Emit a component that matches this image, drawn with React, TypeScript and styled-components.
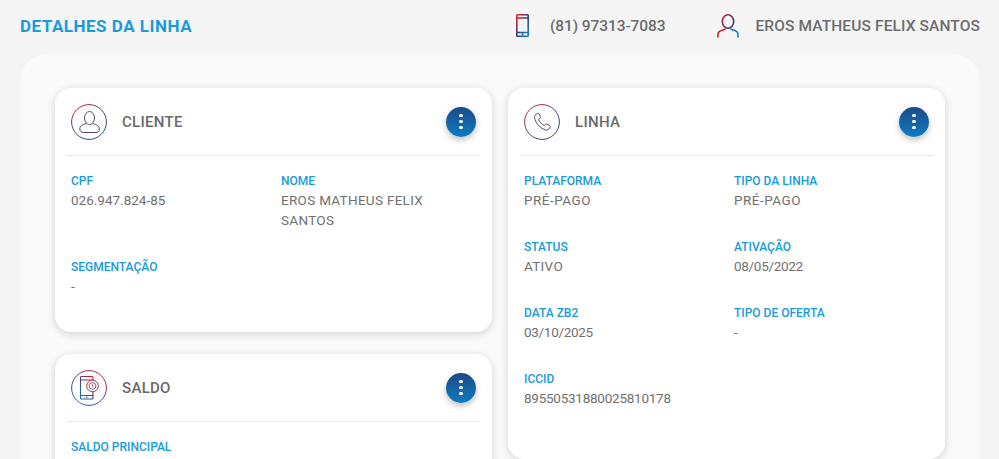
import styled, { createGlobalStyle } from "styled-components";
import type { ReactNode } from "react";

const GlobalStyle = createGlobalStyle`
  html, body {
    margin: 0;
    height: 459px;
    overflow: hidden;
    background: #f5f5f5;
    font-family: "Roboto", "Liberation Sans", sans-serif;
  }
`;

const Page = styled.div`
  width: 999px;
  height: 459px;
  overflow: hidden;
  box-sizing: border-box;
  padding: 0 20px 0 21px;
`;

const TopBar = styled.header`
  height: 55px;
  display: flex;
  align-items: center;
  justify-content: space-between;
  margin: 0 -1px;
  padding-bottom: 4px;
  box-sizing: border-box;
`;

const PageTitle = styled.h1`
  margin: 0;
  font-size: 17px;
  font-weight: 700;
  letter-spacing: 0.5px;
  color: #1a9ad9;
`;

const TopInfo = styled.div`
  display: flex;
  align-items: center;
`;

const InfoItem = styled.div<{ $gap: number; $left?: number; $spacing: number }>`
  display: flex;
  align-items: center;
  gap: ${(p) => p.$gap}px;
  margin-left: ${(p) => p.$left ?? 0}px;
  font-size: 15.5px;
  font-weight: 500;
  letter-spacing: ${(p) => p.$spacing}px;
  color: #6c6c6c;
`;

const Panel = styled.main`
  background: #fafafa;
  border-radius: 24px 24px 0 0;
  padding: 33px 34px 0;
  display: grid;
  grid-template-columns: 437px 437px;
  column-gap: 16px;
  align-items: start;
  height: 404px;
  box-sizing: border-box;
`;

const Column = styled.div`
  display: flex;
  flex-direction: column;
  gap: 22px;
`;

const Card = styled.section<{ $height: number }>`
  background: #fff;
  border-radius: 16px;
  height: ${(p) => p.$height}px;
  box-sizing: border-box;
  padding: 0 12px;
  box-shadow: 0 2px 8px rgba(0, 0, 0, 0.16);
`;

const CardHeader = styled.div`
  height: 67px;
  display: flex;
  align-items: center;
  border-bottom: 1px solid #e9e9e9;
  padding: 0 4px;
`;

const CardTitle = styled.h2`
  margin: 0 0 0 15px;
  flex: 1;
  font-size: 15px;
  font-weight: 500;
  letter-spacing: 0.3px;
  color: #6a6a6a;
`;

const MenuButton = styled.button`
  width: 30px;
  height: 30px;
  padding: 0;
  border: none;
  border-radius: 50%;
  display: flex;
  flex-direction: column;
  align-items: center;
  justify-content: center;
  gap: 2.5px;
  background: linear-gradient(180deg, #1d4a86 0%, #0c7cc2 100%);
  box-shadow: 0 3px 6px rgba(0, 0, 0, 0.25);
`;

const Dot = styled.span`
  width: 3.5px;
  height: 3.5px;
  border-radius: 50%;
  background: #fff;
`;

const Fields = styled.div`
  display: grid;
  grid-template-columns: 210px 1fr;
  padding: 16px 4px 0;
`;

const Field = styled.div`
  padding-bottom: 28px;
  max-width: 170px;
`;

const Label = styled.div`
  font-size: 12px;
  line-height: 18px;
  font-weight: 500;
  color: #1a9ad9;
`;

const Value = styled.div<{ $spacing: number }>`
  font-size: 13.5px;
  line-height: 20px;
  font-weight: 400;
  letter-spacing: ${(p) => p.$spacing}px;
  color: #707070;
`;

const PhoneIcon = () => (
  <svg width="13" height="23" viewBox="0 0 13 23" fill="none">
    <defs>
      <linearGradient id="topPhone" x1="0" y1="0" x2="1" y2="1">
        <stop offset="0.1" stopColor="#d3202f" />
        <stop offset="0.5" stopColor="#2b3f80" />
        <stop offset="1" stopColor="#1680c4" />
      </linearGradient>
    </defs>
    <rect x="0.8" y="0.8" width="11.4" height="21.4" rx="0.8" stroke="url(#topPhone)" strokeWidth="1.6" />
    <path d="M1 4h11M1 18.500h11" stroke="url(#topPhone)" strokeWidth="1.4" />
    <circle cx="6.500" cy="20.300" r="1" fill="#2b3f80" />
  </svg>
);

const UserIcon = () => (
  <svg width="22" height="24" viewBox="0 0 22 24" fill="none" strokeWidth="1.6" strokeLinecap="round">
    <defs>
      <linearGradient id="topHead" x1="0" y1="0" x2="1" y2="1">
        <stop offset="0" stopColor="#c8202f" />
        <stop offset="1" stopColor="#24407f" />
      </linearGradient>
    </defs>
    <ellipse cx="11" cy="7.500" rx="5.700" ry="6.700" stroke="url(#topHead)" />
    <path d="M1 23v-2.500c0-2.500 1.500-3.500 3.500-4l3.500-1.200" stroke="#c8202f" />
    <path d="M21 23v-2.500c0-2.500-1.500-3.500-3.500-4L14 15.300" stroke="#1680c4" />
  </svg>
);

const Ring = ({ id, flip, children }: { id: string; flip?: boolean; children: ReactNode }) => (
  <svg width="36" height="36" viewBox="0 0 36 36" fill="none" style={{ flexShrink: 0 }}>
    <defs>
      <linearGradient id={id} x1={flip ? "0.85" : "0.15"} y1="0.1" x2={flip ? "0.15" : "0.85"} y2="0.9">
        <stop offset="0" stopColor="#c8202f" />
        <stop offset="0.5" stopColor="#4a3a7c" />
        <stop offset="1" stopColor={flip ? "#1f6cb0" : "#1f4e8c"} />
      </linearGradient>
    </defs>
    <circle cx="18" cy="18" r="17.400" stroke={`url(#${id})`} strokeWidth="1" />
    {children}
  </svg>
);

const ClientIcon = () => (
  <Ring id="ringClient">
    <ellipse cx="18.500" cy="14" rx="5" ry="6.500" stroke="#5a4a6e" strokeWidth="1" />
    <path
      d="M15 19.500c-3 1.200-6.200 2-6.200 5.300 0 2.500 1.500 3.700 3.500 3.700h12.500c2 0 3.500-1.200 3.500-3.700 0-3.300-3.200-4.100-6.200-5.300"
      stroke="#4a3f6e"
      strokeWidth="1"
    />
  </Ring>
);

const PhoneCallIcon = () => (
  <Ring id="ringPhone">
    <path
      transform="translate(0 1)"
      d="M11.500 9.500l2.200-1.200c.6-.2 1 0 1.300.5l1.400 3c.2.500.1.900-.3 1.200l-1.500 1.200c.8 2.500 3 5 5.600 6.300l1.500-1.300c.4-.3.800-.4 1.300-.1l2.800 1.700c.5.300.6.800.3 1.300l-1.500 2.100c-.8 1-2 1.200-3.300.7-6-2.300-9.800-7-10.800-12.300-.1-1.200.1-2 1-2.600z"
      stroke="#5a4a6e"
      strokeWidth="1"
    />
  </Ring>
);

const BalanceIcon = () => (
  <Ring id="ringBalance" flip>
    <rect x="9.500" y="6.500" width="12.500" height="22.500" rx="1" stroke="url(#ringBalance)" strokeWidth="1.100" />
    <path d="M9.500 10h12.500M9.500 25.500h12.500" stroke="url(#ringBalance)" strokeWidth="1" />
    <circle cx="21.500" cy="16" r="5.800" fill="#fff" stroke="#b03048" strokeWidth="1" />
    <circle cx="21.500" cy="16" r="3.400" stroke="#4a3f6e" strokeWidth="0.800" />
    <path d="M21.500 14.300v2.200M21.500 17.300v.5" stroke="#c8202f" strokeWidth="0.900" />
    <circle cx="15.700" cy="27.300" r="0.800" fill="#2b5f9c" />
  </Ring>
);

const Menu = () => (
  <MenuButton aria-label="Opções">
    <Dot />
    <Dot />
    <Dot />
  </MenuButton>
);

const Info = ({ label, spacing = 0.3, children }: { label: string; spacing?: number; children?: ReactNode }) => (
  <Field>
    <Label>{label}</Label>
    {children && <Value $spacing={spacing}>{children}</Value>}
  </Field>
);

const App = () => {
  return (
    <>
      <GlobalStyle />
      <Page>
        <TopBar>
          <PageTitle>DETALHES DA LINHA</PageTitle>
          <TopInfo>
            <InfoItem $gap={21} $spacing={-0.1}>
              <PhoneIcon />
              (81) 97313-7083
            </InfoItem>
            <InfoItem $gap={16} $left={52} $spacing={0.12}>
              <UserIcon />
              EROS MATHEUS FELIX SANTOS
            </InfoItem>
          </TopInfo>
        </TopBar>
        <Panel>
          <Column>
            <Card $height={244}>
              <CardHeader>
                <ClientIcon />
                <CardTitle>CLIENTE</CardTitle>
                <Menu />
              </CardHeader>
              <Fields>
                <Info label="CPF" spacing={0}>026.947.824-85</Info>
                <Info label="NOME">EROS MATHEUS FELIX SANTOS</Info>
                <Info label="SEGMENTAÇÃO">-</Info>
              </Fields>
            </Card>
            <Card $height={200}>
              <CardHeader>
                <BalanceIcon />
                <CardTitle>SALDO</CardTitle>
                <Menu />
              </CardHeader>
              <Fields>
                <Info label="SALDO PRINCIPAL" />
              </Fields>
            </Card>
          </Column>
          <Column>
            <Card $height={371}>
              <CardHeader>
                <PhoneCallIcon />
                <CardTitle>LINHA</CardTitle>
                <Menu />
              </CardHeader>
              <Fields>
                <Info label="PLATAFORMA" spacing={0.5}>PRÉ-PAGO</Info>
                <Info label="TIPO DA LINHA" spacing={0.5}>PRÉ-PAGO</Info>
                <Info label="STATUS">ATIVO</Info>
                <Info label="ATIVAÇÃO" spacing={-0.3}>08/05/2022</Info>
                <Info label="DATA ZB2" spacing={-0.3}>03/10/2025</Info>
                <Info label="TIPO DE OFERTA">-</Info>
                <Info label="ICCID" spacing={-0.25}>89550531880025810178</Info>
              </Fields>
            </Card>
          </Column>
        </Panel>
      </Page>
    </>
  );
};

export default App;
